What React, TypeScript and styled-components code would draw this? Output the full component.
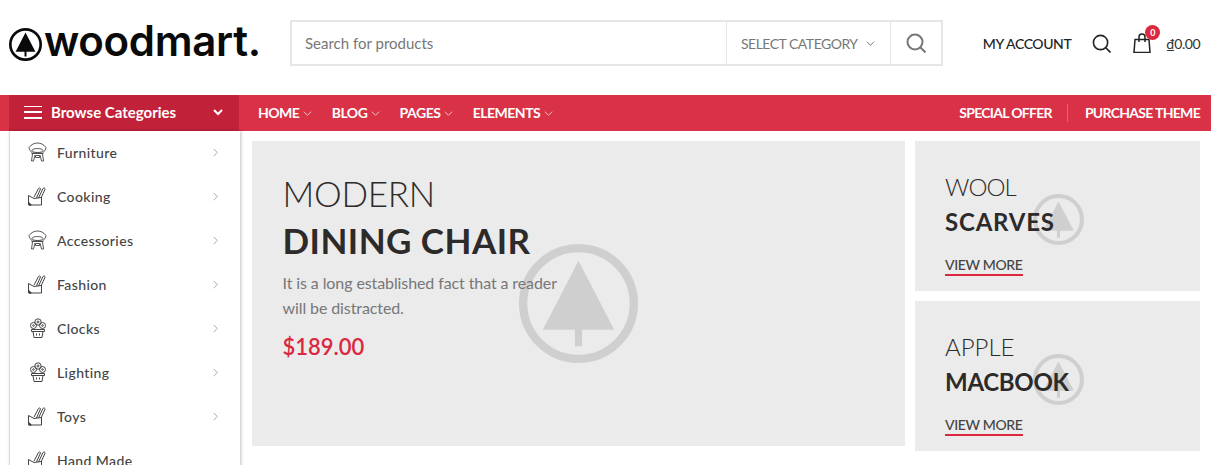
import styled, { createGlobalStyle } from "styled-components";

const RED = "#d93145";
const DARK_RED = "#c2213a";
const PANEL = "#ebebeb";

const GlobalStyle = createGlobalStyle`
  html, body {
    margin: 0;
    height: 465px;
    overflow: hidden;
    background: #fff;
    font-family: "Lato", "Liberation Sans", sans-serif;
  }
  * { box-sizing: border-box; }
`;

const Chevron = ({ dir = "down", size = 8, color = "currentColor", width = 1 }: { dir?: "down" | "right"; size?: number; color?: string; width?: number }) => (
  <svg width={size} height={size} viewBox="0 0 10 10" fill="none" stroke={color} strokeWidth={width * (10 / size)}>
    {dir === "down" ? <path d="M1 3l4 4 4-4" /> : <path d="M3 1l4 4-4 4" />}
  </svg>
);

const TreeMark = ({ size, color, ring, className }: { size: number; color: string; ring: number; className?: string }) => (
  <svg className={className} width={size} height={size} viewBox="0 0 100 100">
    <circle cx="50" cy="50" r={50 - ring / 2} fill="none" stroke={color} strokeWidth={ring} />
    <path d="M50 14L80 72H53V86H47V72H20z" fill={color} />
  </svg>
);

const ChairIcon = () => (
  <svg width="20" height="20" viewBox="0 0 20 20" fill="none" stroke="#444" strokeWidth="0.9">
    <path d="M1 5.500C3 2.500 6.500 1 9.500 1s6.500 1.500 8.500 4.500c-.5 2.500-1.500 4-3.500 5.500h-10C2.500 9.500 1.500 8 1 5.500z" />
    <ellipse cx="9.500" cy="8.500" rx="5.500" ry="2" />
    <path d="M3.500 11.500h12M4.500 12l-1 7h2l1.500-6M14.500 12l1 7h-2L12 13M7.500 13.500h4v2h-4z" />
  </svg>
);

const KnivesIcon = () => (
  <svg width="20" height="20" viewBox="0 0 20 20" fill="none" stroke="#444" strokeWidth="1">
    <path d="M.5 9.500V19h13v-7.500M.5 9.500l5.500 3 7.500-1" />
    <path d="M.5 17l2.500 2.500" strokeWidth="2.200" />
    <path d="M6 11l4.500-8.500c.8-1 2-.5 2 .5L8.500 12" />
    <path d="M10.500 12l4.500-9.500c.8-1 2.200-.5 2 .8L13 12" />
  </svg>
);

const FlowerIcon = () => (
  <svg width="20" height="20" viewBox="0 0 20 20" fill="none" stroke="#444" strokeWidth="1">
    <circle cx="10" cy="4" r="3.200" />
    <circle cx="5.500" cy="7.500" r="3" />
    <circle cx="14.500" cy="7.500" r="3" />
    <circle cx="10" cy="4" r="1" />
    <circle cx="5.500" cy="7.500" r=".8" />
    <circle cx="14.500" cy="7.500" r=".8" />
    <path d="M3.500 11.500h13v2h-13zM5 13.500l1 6h8l1-6M8.500 15.500v2M11.500 15.500v2" />
  </svg>
);

const Page = styled.div`
  width: 1211px;
  height: 465px;
  overflow: hidden;
`;

const Header = styled.header`
  display: flex;
  align-items: center;
  height: 95px;
  padding: 0 11px 9px 9px;
`;

const Logo = styled.div`
  display: flex;
  align-items: center;
  width: 281px;
  gap: 2px;
  svg { margin-top: 2px; }
`;

const LogoText = styled.span`
  font-family: "Inter", sans-serif;
  font-size: 42px;
  font-weight: 600;
  letter-spacing: -0.3px;
  line-height: 1;
  color: #0a0a0a;
  margin-top: -4px;
`;

const SearchBox = styled.div`
  display: flex;
  align-items: stretch;
  width: 653px;
  height: 46px;
  border: 2px solid #e6e6e6;
`;

const SearchInput = styled.div`
  flex: 1;
  display: flex;
  align-items: center;
  padding-left: 13px;
  font-size: 15px;
  color: #777;
`;

const CategorySelect = styled.div`
  display: flex;
  align-items: center;
  width: 164px;
  padding-left: 14px;
  gap: 8px;
  border-left: 1px solid #e6e6e6;
  font-size: 14px;
  letter-spacing: -0.5px;
  color: #777;
`;

const SearchButton = styled.div`
  display: flex;
  align-items: center;
  justify-content: center;
  width: 51px;
  border-left: 1px solid #e6e6e6;
  color: #777;
`;

const Actions = styled.div`
  display: flex;
  align-items: center;
  margin-left: auto;
  color: #222;
`;

const AccountLink = styled.span`
  font-size: 14px;
  font-weight: 500;
  letter-spacing: -0.4px;
  margin-right: 21px;
`;

const IconLink = styled.span`
  display: flex;
  margin-right: 22px;
`;

const Cart = styled.span`
  position: relative;
  display: flex;
  margin-right: 15px;
`;

const Badge = styled.span`
  position: absolute;
  top: -8px;
  right: -9px;
  width: 15px;
  height: 15px;
  border-radius: 50%;
  background: #dc283f;
  color: #fff;
  font-size: 9px;
  font-weight: 700;
  line-height: 15px;
  text-align: center;
`;

const CartTotal = styled.span`
  font-size: 14px;
  letter-spacing: -0.5px;
  color: #333;
`;

const NavBar = styled.nav`
  display: flex;
  align-items: center;
  height: 36px;
  padding: 0 11px 0 9px;
  background: ${RED};
  color: #fff;
`;

const Browse = styled.div`
  display: flex;
  align-items: center;
  width: 230px;
  height: 100%;
  padding: 0 16px 2px 15px;
  background: ${DARK_RED};
  font-size: 15px;
  font-weight: 700;
`;

const Burger = styled.span`
  display: flex;
  flex-direction: column;
  justify-content: space-between;
  width: 18px;
  height: 13px;
  margin-right: 9px;
  span {
    height: 1.500px;
    background: #fff;
  }
`;

const BrowseArrow = styled.span`
  display: flex;
  margin-left: auto;
`;

const NavMenu = styled.div`
  display: flex;
  align-items: center;
  gap: 19.300px;
  padding-left: 19px;
`;

const NavItem = styled.span<{ $tight?: boolean }>`
  display: flex;
  align-items: center;
  gap: 4px;
  padding-bottom: 2px;
  font-size: 14px;
  font-weight: 700;
  letter-spacing: ${(p) => (p.$tight ? "-0.7px" : "-0.5px")};
  svg { opacity: 0.7; margin-top: 2px; }
`;

const NavRight = styled.div`
  display: flex;
  align-items: center;
  margin-left: auto;
`;

const NavDivider = styled.span`
  width: 1px;
  height: 18px;
  margin: 0 17px 0 15px;
  background: rgba(255, 255, 255, 0.25);
`;

const Content = styled.div`
  display: flex;
  align-items: flex-start;
  padding-left: 9px;
`;

const Sidebar = styled.aside`
  width: 231px;
  height: 340px;
  border-left: 1px solid #ddd;
  box-shadow: 1px 0 3px rgba(0, 0, 0, 0.25);
  background: #fff;
  overflow: hidden;
`;

const CategoryRow = styled.div`
  display: flex;
  align-items: center;
  height: 44px;
  padding: 0 20px 2px 18px;
  font-size: 14px;
  font-weight: 500;
  letter-spacing: 0.4px;
  color: #444;
`;

const CategoryIcon = styled.span`
  display: flex;
  width: 29px;
`;

const RowArrow = styled.span`
  display: flex;
  margin-left: auto;
`;

const Banners = styled.main`
  display: grid;
  grid-template-columns: 653px 285px;
  gap: 10px;
  margin: 10px 0 0 12px;
`;

const Hero = styled.section`
  position: relative;
  height: 305px;
  padding: 29px 30px 0 30.500px;
  background: ${PANEL};
`;

const SideColumn = styled.div`
  display: flex;
  flex-direction: column;
  gap: 10px;
`;

const SideBanner = styled.section`
  position: relative;
  height: 150px;
  padding: 29px 30px 0 30px;
  background: ${PANEL};
`;

const Watermark = styled(TreeMark)<{ $x: number; $y: number }>`
  position: absolute;
  left: ${(p) => p.$x}px;
  top: ${(p) => p.$y}px;
`;

const Layer = styled.div`
  position: relative;
  color: #2d2a2a;
`;

const HeroTitle = styled.div<{ $bold?: boolean }>`
  margin-top: ${(p) => (p.$bold ? "1px" : "0")};
  font-size: 35px;
  line-height: 46px;
  font-weight: ${(p) => (p.$bold ? 700 : 300)};
  letter-spacing: ${(p) => (p.$bold ? "0.45px" : "-0.3px")};
`;

const HeroText = styled.p`
  width: 290px;
  margin: 7px 0 0;
  font-size: 16px;
  line-height: 25px;
  letter-spacing: -0.1px;
  color: #777;
`;

const Price = styled.div`
  margin-top: 12px;
  font-size: 22px;
  line-height: 30px;
  font-weight: 600;
  color: #dc283f;
`;

const SideTitle = styled.div<{ $bold?: boolean; $spacing: number }>`
  margin-top: ${(p) => (p.$bold ? "2px" : "0")};
  font-size: 24px;
  line-height: 33px;
  font-weight: ${(p) => (p.$bold ? 700 : 300)};
  letter-spacing: ${(p) => p.$spacing}px;
`;

const ViewMore = styled.span`
  display: inline-block;
  margin-top: 17px;
  border-bottom: 2px solid #dc283f;
  font-size: 14px;
  line-height: 19px;
  font-weight: 500;
  letter-spacing: -0.35px;
  color: #444;
`;

const categories = [
  { name: "Furniture", Icon: ChairIcon },
  { name: "Cooking", Icon: KnivesIcon },
  { name: "Accessories", Icon: ChairIcon },
  { name: "Fashion", Icon: KnivesIcon },
  { name: "Clocks", Icon: FlowerIcon },
  { name: "Lighting", Icon: FlowerIcon },
  { name: "Toys", Icon: KnivesIcon },
  { name: "Hand Made", Icon: KnivesIcon },
];

const sideBanners = [
  { light: "WOOL", lightSpacing: -0.9, bold: "SCARVES", boldSpacing: 0.8 },
  { light: "APPLE", lightSpacing: 0, bold: "MACBOOK", boldSpacing: -0.3 },
];

const SearchGlyph = ({ size, width }: { size: number; width: number }) => (
  <svg width={size} height={size} viewBox="0 0 20 20" fill="none" stroke="currentColor" strokeWidth={width}>
    <circle cx="9" cy="9" r="7.500" />
    <path d="M14.500 14.500l5 5" />
  </svg>
);

export default function App() {
  return (
    <Page>
      <GlobalStyle />
      <Header>
        <Logo>
          <TreeMark size={33} color="#0a0a0a" ring={8} />
          <LogoText>woodmart.</LogoText>
        </Logo>
        <SearchBox>
          <SearchInput>Search for products</SearchInput>
          <CategorySelect>
            SELECT CATEGORY
            <Chevron size={9} />
          </CategorySelect>
          <SearchButton>
            <SearchGlyph size={20} width={2} />
          </SearchButton>
        </SearchBox>
        <Actions>
          <AccountLink>MY ACCOUNT</AccountLink>
          <IconLink>
            <SearchGlyph size={19} width={1.700} />
          </IconLink>
          <Cart>
            <svg width="18" height="20" viewBox="0 0 18 20" fill="none" stroke="#222" strokeWidth="1.500">
              <path d="M2 6.500h14l1 13H1zM6 9V4a3 3 0 0 1 6 0v5" />
            </svg>
            <Badge>0</Badge>
          </Cart>
          <CartTotal>₫0.00</CartTotal>
        </Actions>
      </Header>
      <NavBar>
        <Browse>
          <Burger>
            <span />
            <span />
            <span />
          </Burger>
          Browse Categories
          <BrowseArrow>
            <Chevron size={10} width={2} />
          </BrowseArrow>
        </Browse>
        <NavMenu>
          {["HOME", "BLOG", "PAGES", "ELEMENTS"].map((label) => (
            <NavItem key={label}>
              {label}
              <Chevron size={9} />
            </NavItem>
          ))}
        </NavMenu>
        <NavRight>
          <NavItem $tight>SPECIAL OFFER</NavItem>
          <NavDivider />
          <NavItem $tight>PURCHASE THEME</NavItem>
        </NavRight>
      </NavBar>
      <Content>
        <Sidebar>
          {categories.map(({ name, Icon }) => (
            <CategoryRow key={name}>
              <CategoryIcon>
                <Icon />
              </CategoryIcon>
              {name}
              {name !== "Hand Made" && (
                <RowArrow>
                  <Chevron dir="right" size={9} color="#aaa" />
                </RowArrow>
              )}
            </CategoryRow>
          ))}
        </Sidebar>
        <Banners>
          <Hero>
            <Watermark size={119} color="#cfcfcf" ring={7} $x={267} $y={103} />
            <Layer>
              <HeroTitle>MODERN</HeroTitle>
              <HeroTitle $bold>DINING CHAIR</HeroTitle>
              <HeroText>It is a long established fact that a reader will be distracted.</HeroText>
              <Price>$189.00</Price>
            </Layer>
          </Hero>
          <SideColumn>
            {sideBanners.map((b) => (
              <SideBanner key={b.bold}>
                <Watermark size={51} color="#cfcfcf" ring={8} $x={118} $y={53} />
                <Layer>
                  <SideTitle $spacing={b.lightSpacing}>{b.light}</SideTitle>
                  <SideTitle $bold $spacing={b.boldSpacing}>{b.bold}</SideTitle>
                  <ViewMore>VIEW MORE</ViewMore>
                </Layer>
              </SideBanner>
            ))}
          </SideColumn>
        </Banners>
      </Content>
    </Page>
  );
}
